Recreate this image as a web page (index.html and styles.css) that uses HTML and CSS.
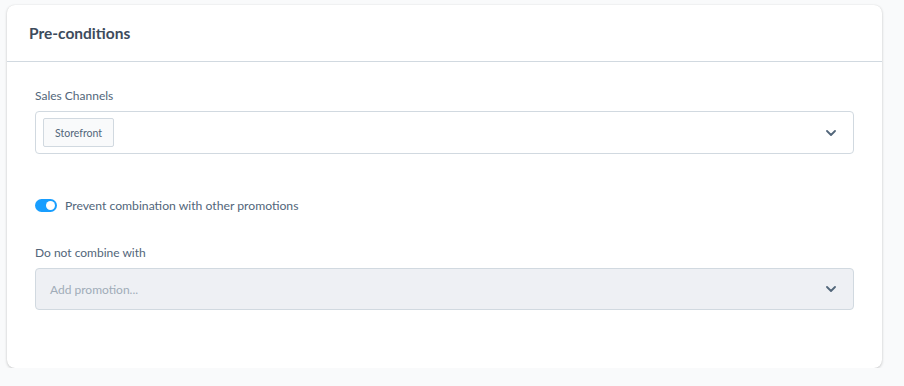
FILE: index.html
```html
<!DOCTYPE html>
<html lang="en">
<head>
  <meta charset="UTF-8" />
  <title>Pre-conditions</title>
  <link rel="stylesheet" href="styles.css">
</head>
<body>
  <div class="card">
    <div class="card-header">
      <h3>Pre-conditions</h3>
    </div>
    <div class="card-body">
      <!-- Sales channels -->
      <div class="field">
        <label>Sales Channels</label>
        <div class="select">
          <div class="select-values">
            <span class="chip">Storefront</span>
          </div>
          <svg class="chevron" width="10" height="6" viewBox="0 0 10 6"><path d="M1 1l4 4 4-4" fill="none" stroke="#52667a" stroke-width="1.8" stroke-linecap="round" stroke-linejoin="round"/></svg>
        </div>
      </div>

      <!-- Toggle -->
      <div class="switch-row">
        <span class="switch"><span class="knob"></span></span>
        <span class="switch-label">Prevent combination with other promotions</span>
      </div>

      <!-- Exclusions -->
      <div class="field">
        <label>Do not combine with</label>
        <div class="select disabled">
          <div class="select-values">
            <span class="placeholder">Add promotion...</span>
          </div>
          <svg class="chevron" width="10" height="6" viewBox="0 0 10 6"><path d="M1 1l4 4 4-4" fill="none" stroke="#52667a" stroke-width="1.8" stroke-linecap="round" stroke-linejoin="round"/></svg>
        </div>
      </div>
    </div>
  </div>
</body>
</html>
```
FILE: styles.css
```css
* { box-sizing: border-box; }
body {
  margin: 0;
  padding: 5px 22px 0 7px;
  font-family: Lato, "Noto Sans", sans-serif;
  background: #f9fafb;
  color: #52667a;
}

.card {
  background: #fff;
  border-radius: 8px;
  box-shadow: 0 1px 3px rgba(0, 0, 0, 0.2), 0 0 1px rgba(0, 0, 0, 0.1);
  height: 363px;
}

.card-header {
  height: 57px;
  border-bottom: 1px solid #d1d9e0;
  display: flex;
  align-items: center;
  padding: 0 22px;
}

.card-header h3 {
  margin: 0;
  font-size: 15.5px;
  font-weight: 700;
  color: #3d4b5c;
}

.card-body {
  padding: 25px 28px 0;
}

.field label {
  display: block;
  font-size: 12px;
  line-height: 18px;
  margin-bottom: 6px;
  color: #52667a;
}

.select {
  display: flex;
  align-items: center;
  height: 43px;
  border: 1px solid #d1d9e0;
  border-radius: 4px;
  padding: 0 7px;
  background: #fff;
}

.select-values {
  flex: 1;
  display: flex;
  align-items: center;
}

.chip {
  display: inline-flex;
  align-items: center;
  height: 29px;
  padding: 0 11px;
  border: 1px solid #d1d9e0;
  border-radius: 2px;
  background: #f9fafb;
  font-size: 10.5px;
  color: #52667a;
}

.chevron {
  margin-right: 10px;
}

.select.disabled {
  height: 42px;
  background: #eef0f4;
}

.placeholder {
  padding-left: 7px;
  font-size: 12px;
  color: #a0acb8;
}

.switch-row {
  display: flex;
  align-items: center;
  margin: 44px 0 32px;
  height: 14px;
}

.switch {
  position: relative;
  width: 22px;
  height: 13px;
  border-radius: 7px;
  background: #189eff;
  margin-right: 8px;
}

.switch .knob {
  position: absolute;
  right: 2px;
  top: 2px;
  width: 9px;
  height: 9px;
  border-radius: 50%;
  background: #fff;
}

.switch-label {
  font-size: 12.2px;
  color: #52667a;
}
```
